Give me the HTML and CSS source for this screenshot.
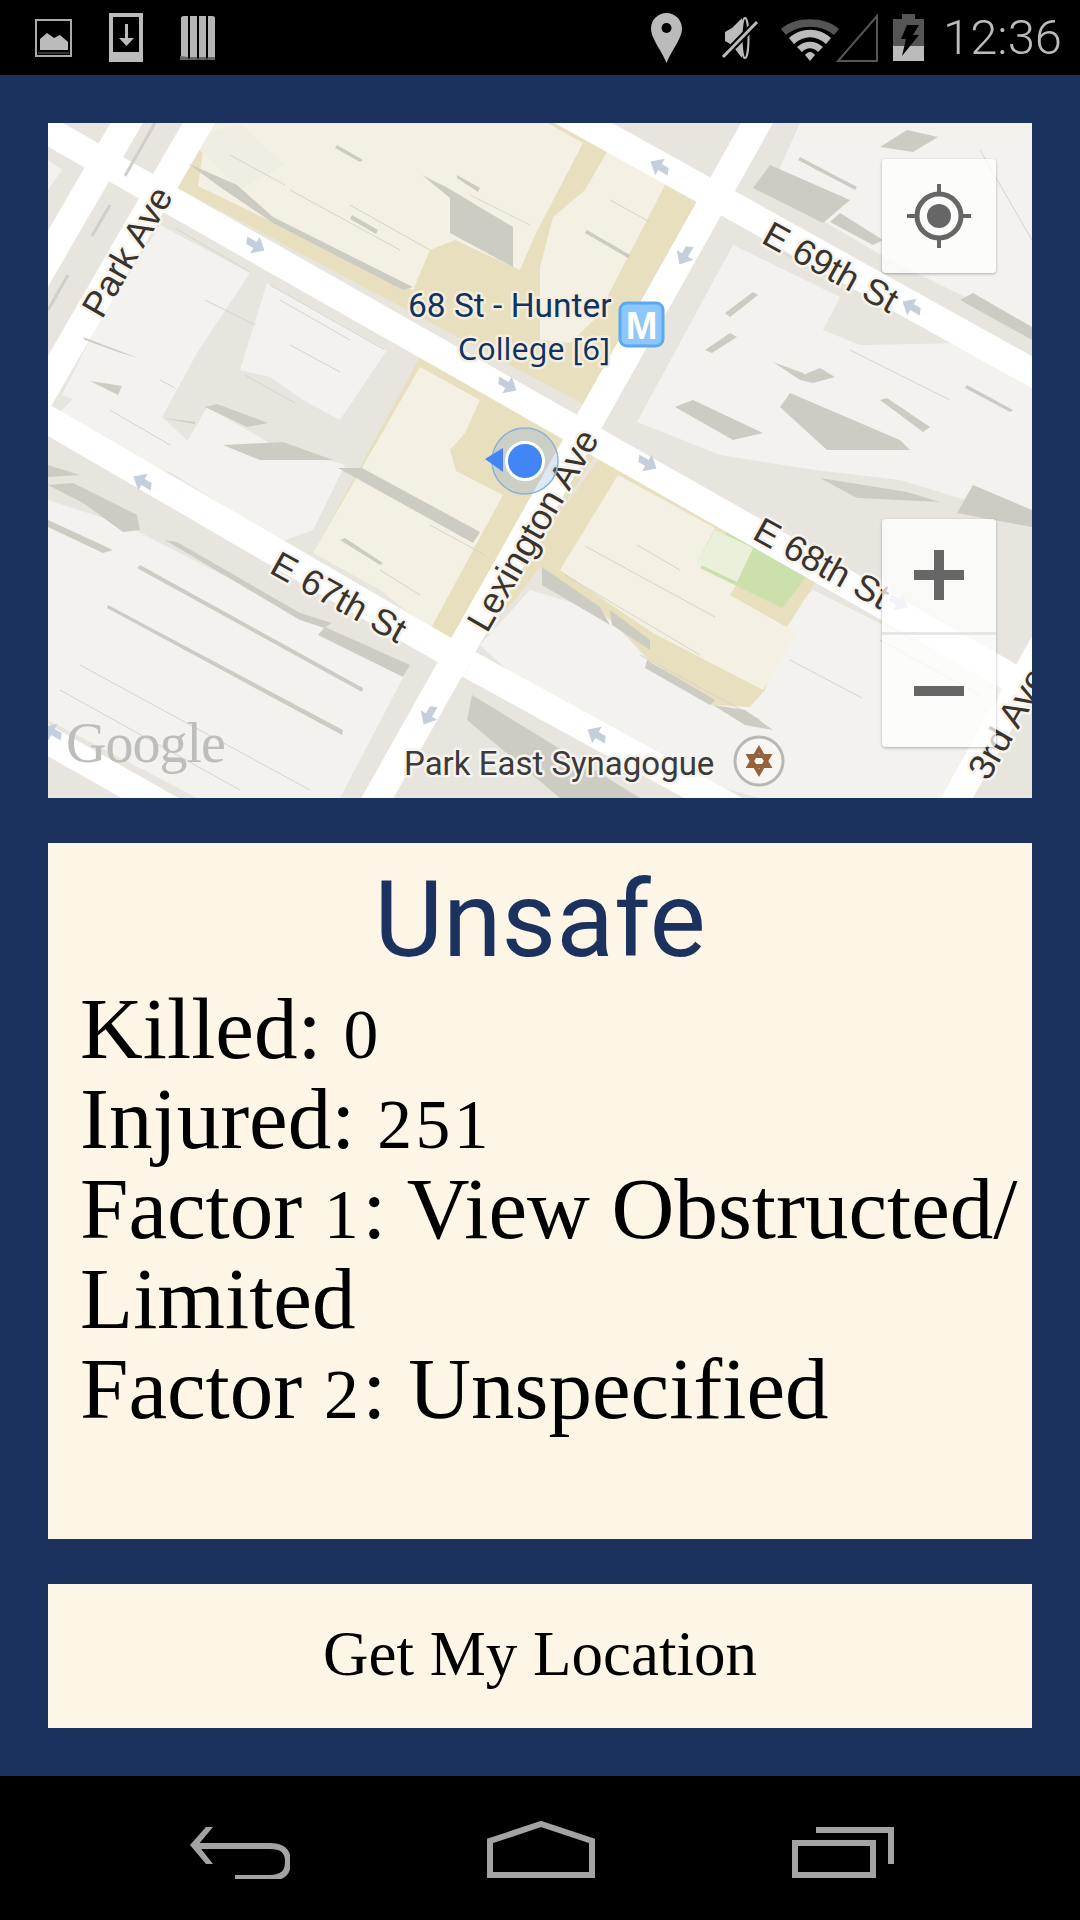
FILE: index.html
```html
<!DOCTYPE html>
<html lang="en">
<head>
    <meta charset="UTF-8">
    <meta name="viewport" content="width=device-width, initial-scale=1.0">
    <title>Safe Streets</title>
    <link rel="stylesheet" href="styles.css">
</head>
<body>
    <div class="status-bar">
        <div class="status-left">
            <svg class="icon" width="37" height="38" viewBox="0 0 37 38"><path d="M1 1h35v36H1z" fill="none" stroke="#aaa" stroke-width="2"/><path d="M5 31V20l7-6 7 5 6-3 8 7v8z" fill="#bbb"/><path d="M3 33h31v2H3z" fill="#333"/></svg>
            <svg class="icon" width="34" height="49" viewBox="0 0 34 49"><path d="M2 2h30v45H2z" fill="none" stroke="#bbb" stroke-width="4"/><path d="M2 39h30v8H2z" fill="#bbb"/><path d="M16 11h3v17h-3z" fill="#bbb"/><path d="M10 25h15l-7.500 8z" fill="#bbb"/></svg>
            <svg class="icon" width="36" height="45" viewBox="0 0 36 45"><path d="M1 3q0-2 3-2h4v44H1zM10 1h7v44h-7zM19 1h7v44h-7zM28 1h4q3 0 3 2v42h-7z" fill="#b5b5b5"/><path d="M0 41l8 1 1 3 1-3 7 0 1 3 1-3 7 0 1 3 1-3 7 0v4H0z" fill="#666"/></svg>
        </div>
        <div class="status-right">
            <svg class="icon icon-pin" width="31" height="50" viewBox="0 0 31 50"><path d="M15.500 0C7 0 0 7 0 15.500 0 26 10 36 15.500 50 21 36 31 26 31 15.500 31 7 24 0 15.500 0z" fill="#bbb"/><circle cx="15.500" cy="15" r="5" fill="#000"/></svg>
            <svg class="icon icon-mute" width="38" height="42" viewBox="0 0 38 42"><path d="M4 15 11 11 21 1v40L11 28 4 24z" fill="#bbb"/><ellipse cx="24" cy="21" rx="3.500" ry="20" fill="none" stroke="#bbb" stroke-width="2"/><path d="M2 40 36 5" stroke="#000" stroke-width="7"/><path d="M2 40 36 5" stroke="#bbb" stroke-width="3"/></svg>
            <svg class="icon icon-wifi" width="97" height="48" viewBox="0 0 97 48"><path d="M0 15C14 2 44 2 58 15L53 21C40 10 18 10 5 21z" fill="#555"/><path d="M8 24C20 13 38 13 50 24L45 30C35 21 23 21 13 30z" fill="#bbb"/><path d="M16 33C24 26 34 26 42 33L37 38C32 33 26 33 21 38z" fill="#bbb"/><path d="M24 41C27 37 31 37 34 41L29 47z" fill="#bbb"/><path d="M96 2V47H57z" fill="none" stroke="#555" stroke-width="2"/></svg>
            <svg class="icon icon-batt" width="31" height="47" viewBox="0 0 31 47"><path d="M9 0h13v5h9v42H0V5h9z" fill="#555"/><path d="M0 32h31v15H0z" fill="#bbb"/><path d="M14 11h12l-6 10h6L9 42l4-17H8z" fill="#000"/></svg>
            <span class="clock">12:36</span>
        </div>
    </div>

    <main class="app">
        <div class="map">
            <svg class="map-art" width="984" height="675" viewBox="48 123 984 675">
                <defs>
                    <path id="oneway" d="M-11-3.500H0v-6L11 0 0 9.500v-6H-8z"/>
                </defs>
                <rect class="ground" x="48" y="123" width="984" height="675"/>

                <!-- light building footprints -->
                <g class="bld">
                    <polygon points="160,225 250,273 197,353 155,430 62,395 100,320"/>
                    <polygon points="267,283 387,350 340,420 303,400 270,377 240,370"/>
                    <polygon points="207,407 270,443 345,465 313,530 280,542 170,472"/>
                    <polygon points="60,412 90,382 163,418 190,443 170,472 125,460 70,432 48,420"/>
                    <polygon points="48,500 125,525 407,670 340,798 197,798 48,720"/>
                    <polygon points="480,645 530,590 607,613 647,660 713,690 743,708 790,745 760,798 620,760 540,700"/>
                    <polygon points="780,620 813,590 1013,690 950,798 760,798 700,720"/>
                    <polygon points="733,245 840,297 823,330 860,345 967,343 1032,377 1032,520 900,480 815,470 720,455 637,422"/>
                    <polygon points="800,123 1032,123 1032,330 890,260 770,190"/>
                    <polygon points="48,160 62,170 48,190"/>
                </g>

                <!-- college grounds -->
                <g class="tan">
                    <polygon points="215,123 555,123 697,203 585,405 178,188"/>
                    <polygon points="420,357 597,453 463,664 430,630 377,580 313,553"/>
                    <polygon points="612,440 820,575 785,630 765,690 750,707 712,705 650,660 600,610 540,567 515,600 470,640"/>
                </g>
                <g class="cream">
                    <polygon points="207,123 547,123 583,143 535,235 520,270 455,240 430,250 413,290 198,186"/>
                    <polygon points="612,143 665,185 597,317 570,343 540,340 540,267 553,217 585,190"/>
                    <polygon points="420,367 480,400 465,433 450,450 456,471 503,495 430,630 380,590 313,553"/>
                    <polygon points="618,475 715,528 697,563 737,583 730,595 797,633 763,690 653,633 560,570"/>
                </g>
                <polygon class="hatch" points="190,140 240,123 285,165 240,190"/>
                <polygon class="grass" points="738,518 808,575 782,608 700,568"/>
                <polygon class="grass-light" points="715,530 753,548 737,582 697,563"/>

                <!-- thin building outlines -->
                <g class="outline">
                    <line x1="175" y1="228" x2="250" y2="272"/>
                    <line x1="205" y1="300" x2="255" y2="325"/>
                    <line x1="270" y1="285" x2="385" y2="350"/>
                    <line x1="280" y1="300" x2="350" y2="340"/>
                    <line x1="290" y1="345" x2="340" y2="372"/>
                    <line x1="245" y1="375" x2="295" y2="403"/>
                    <line x1="160" y1="380" x2="175" y2="388"/>
                    <line x1="80" y1="665" x2="310" y2="790"/>
                    <line x1="60" y1="690" x2="240" y2="790"/>
                    <line x1="110" y1="410" x2="170" y2="445"/>
                    <line x1="230" y1="155" x2="285" y2="185"/>
                    <line x1="290" y1="190" x2="400" y2="250"/>
                    <line x1="350" y1="205" x2="430" y2="250"/>
                    <line x1="470" y1="195" x2="530" y2="225"/>
                    <line x1="610" y1="200" x2="650" y2="222"/>
                    <line x1="430" y1="525" x2="485" y2="555"/>
                    <line x1="380" y1="570" x2="420" y2="595"/>
                    <line x1="637" y1="545" x2="680" y2="570"/>
                    <line x1="585" y1="546" x2="715" y2="617"/>
                    <line x1="565" y1="575" x2="700" y2="655"/>
                    <line x1="640" y1="655" x2="760" y2="720"/>
                    <line x1="790" y1="660" x2="862" y2="698"/>
                    <line x1="880" y1="640" x2="980" y2="695"/>
                    <line x1="760" y1="240" x2="840" y2="285"/>
                    <line x1="850" y1="350" x2="950" y2="400"/>
                    <line x1="980" y1="150" x2="1032" y2="240"/>
                </g>

                <!-- streets -->
                <g class="roads">
                    <line x1="-20" y1="92" x2="1100" y2="728"/>
                    <line x1="560" y1="110" x2="1100" y2="410"/>
                    <line x1="0" y1="392" x2="470" y2="665"/>
                    <line x1="470" y1="665" x2="790" y2="840"/>
                    <line x1="30" y1="730" x2="180" y2="815"/>
                    <line x1="140" y1="100" x2="20" y2="307"/>
                    <line x1="215" y1="95" x2="20" y2="432"/>
                    <line x1="770" y1="100" x2="365" y2="820"/>
                    <line x1="1080" y1="580" x2="950" y2="810"/>
                </g>
                <g class="median">
                    <line x1="155" y1="123" x2="125" y2="176"/>
                    <line x1="110" y1="205" x2="92" y2="236"/>
                    <line x1="68" y1="275" x2="48" y2="310"/>
                </g>

                <!-- building shadows -->
                <g class="shadow">
                    <polygon points="187,163 237,185 273,217 413,287 403,290 273,223 220,187 190,165"/>
                    <polygon points="422,175 448,188 513,227 513,267 450,233 450,198"/>
                    <polygon points="337,145 363,160 360,162 335,148"/>
                    <polygon points="457,175 480,188 478,192 457,178"/>
                    <polygon points="587,230 630,255 628,258 585,233"/>
                    <polygon points="352,215 378,230 376,234 350,219"/>
                    <polygon points="83,337 138,358 118,352 85,340"/>
                    <polygon points="90,381 122,386 118,395"/>
                    <polygon points="162,418 195,422 195,424"/>
                    <polygon points="205,407 217,404 268,423 247,427"/>
                    <polygon points="223,445 283,442 333,460 260,460"/>
                    <polygon points="338,468 362,468 480,532 473,543"/>
                    <polygon points="340,540 345,538 383,563 380,565"/>
                    <polygon points="48,465 80,475 48,477"/>
                    <polygon points="48,485 73,483 137,515 140,530 123,532 83,503"/>
                    <polygon points="48,520 113,550 103,553 48,527"/>
                    <polygon points="165,540 177,542 300,613 332,623 324,628 300,620"/>
                    <polygon points="325,627 410,665 403,677 318,635"/>
                    <polygon points="140,565 363,688 362,692 137,568"/>
                    <polygon points="108,605 343,730 342,735 107,608"/>
                    <polygon points="542,567 600,607 610,625 542,585"/>
                    <polygon points="610,610 650,640 650,650 612,625"/>
                    <polygon points="647,660 715,700 710,705 645,668"/>
                    <polygon points="713,705 745,710 773,730 745,725"/>
                    <polygon points="472,695 640,798 560,798 467,720"/>
                    <polygon points="753,188 770,165 850,200 823,223"/>
                    <polygon points="830,222 840,213 883,240 873,245"/>
                    <polygon points="960,300 973,293 1032,327 1032,340"/>
                    <polygon points="800,157 857,187 855,190 798,160"/>
                    <polygon points="880,147 907,130 938,137 913,152"/>
                    <polygon points="675,407 693,400 763,433 733,440"/>
                    <polygon points="725,313 753,292 758,295 730,317"/>
                    <polygon points="705,350 730,333 737,337 712,353"/>
                    <polygon points="773,362 803,373 813,383 800,380"/>
                    <polygon points="803,375 820,368 835,377 813,383"/>
                    <polygon points="780,407 790,393 900,440 910,450 827,450"/>
                    <polygon points="880,400 887,398 930,427 923,432"/>
                    <polygon points="967,385 1013,410 1010,412 965,388"/>
                    <polygon points="820,478 907,492 940,502 857,498"/>
                    <polygon points="957,513 973,485 1032,510 1032,527"/>
                </g>

                <!-- one way arrows -->
                <g class="arrows">
                    <use href="#oneway" transform="translate(255 245) rotate(30)"/>
                    <use href="#oneway" transform="translate(507 385) rotate(30)"/>
                    <use href="#oneway" transform="translate(647 463) rotate(30)"/>
                    <use href="#oneway" transform="translate(898 602) rotate(30)"/>
                    <use href="#oneway" transform="translate(660 167) rotate(210)"/>
                    <use href="#oneway" transform="translate(912 307) rotate(210)"/>
                    <use href="#oneway" transform="translate(143 482) rotate(210)"/>
                    <use href="#oneway" transform="translate(597 735) rotate(210)"/>
                    <use href="#oneway" transform="translate(53 732) rotate(210)"/>
                    <use href="#oneway" transform="translate(685 255) rotate(120)"/>
                    <use href="#oneway" transform="translate(429 715) rotate(120)"/>
                </g>

                <!-- labels -->
                <g class="labels">
                    <text class="label road-name" x="102" y="320" transform="rotate(-60 102 320)">Park Ave</text>
                    <text class="label road-name" x="760" y="242" transform="rotate(29 760 242)">E 69th St</text>
                    <text class="label road-name" x="751" y="538" transform="rotate(29 751 538)">E 68th St</text>
                    <text class="label road-name" x="268" y="572" transform="rotate(29 268 572)">E 67th St</text>
                    <text class="label road-name" x="487" y="634" transform="rotate(-60 487 634)">Lexington Ave</text>
                    <text class="label road-name" x="988" y="782" transform="rotate(-60 988 782)">3rd Ave</text>
                    <text class="label transit" x="408" y="317">68 St - Hunter</text>
                    <text class="label transit transit-alt" x="458" y="360">College [6]</text>
                    <text class="label place" x="404" y="775">Park East Synagogue</text>
                </g>
                <text class="google" x="66" y="762">Google</text>

                <!-- metro badge -->
                <rect x="620" y="303" width="43" height="43" rx="7" class="metro"/>
                <text x="641.500" y="339" class="metro-m">M</text>

                <!-- synagogue -->
                <circle cx="759" cy="761" r="24" class="syn"/>
                <path d="M759 749l10 17h-20zM759 773l-10-17h20z" class="star"/>

                <!-- my location -->
                <circle cx="525" cy="461" r="33" class="loc-halo"/>
                <path d="M485 459l18-11v24z" class="loc-arrow"/>
                <circle cx="525" cy="461" r="18.500" class="loc-dot"/>
            </svg>

            <div class="map-btn locate-btn">
                <svg width="64" height="64" viewBox="0 0 64 64"><circle cx="32" cy="32" r="22" fill="none" stroke="#666" stroke-width="5"/><circle cx="32" cy="32" r="12" fill="#666"/><path d="M32 0v12M32 52v12M0 32h12M52 32h12" stroke="#666" stroke-width="4"/></svg>
            </div>
            <div class="map-btn zoom-btns">
                <div class="zoom-cell"><svg width="50" height="50" viewBox="0 0 50 50"><path d="M20 0h10v20h20v10H30v20H20V30H0V20h20z" fill="#666"/></svg></div>
                <div class="zoom-cell zoom-cell-minus"><svg width="50" height="10" viewBox="0 0 50 10"><path d="M0 0h50v10H0z" fill="#666"/></svg></div>
            </div>
        </div>

        <section class="info-card">
            <h1 class="verdict">Unsafe</h1>
            <div class="stats">
                <div>Killed: <span class="num">0</span></div>
                <div>Injured: <span class="num">251</span></div>
                <div>Factor <span class="num">1</span>: View Obstructed/<br>Limited</div>
                <div>Factor <span class="num">2</span>: Unspecified</div>
            </div>
        </section>

        <button class="location-button">Get My Location</button>
    </main>

    <div class="nav-bar">
        <svg class="nav-icon" width="100" height="52" viewBox="0 0 100 52"><path d="M3 19H80c11 0 18 4 18 16 0 11-6 16-18 16H45" fill="none" stroke="#a3a3a3" stroke-width="6"/><path d="M23 0H16L0 18l16 19h7L8 18z" fill="#a3a3a3"/></svg>
        <svg width="108" height="57" viewBox="0 0 108 57"><path d="M3 54V20L54 3l51 17v34z" fill="none" stroke="#a3a3a3" stroke-width="6"/></svg>
        <svg class="nav-icon" width="102" height="52" viewBox="0 0 102 52"><path d="M24 3H99V37" fill="none" stroke="#a3a3a3" stroke-width="6"/><path d="M3 16H81V48H3z" fill="none" stroke="#a3a3a3" stroke-width="6"/></svg>
    </div>
</body>
</html>
```

FILE: styles.css
```css
* {
    box-sizing: border-box;
}
body {
    margin: 0;
    width: 1080px;
    height: 1920px;
    display: flex;
    flex-direction: column;
    background: #1c325e;
    font-family: 'Liberation Serif', serif;
    color: #000;
    overflow: hidden;
}
.status-bar {
    height: 75px;
    background: #000;
    display: flex;
    justify-content: space-between;
    align-items: center;
    padding: 0 18px 0 35px;
}
.status-left, .status-right {
    display: flex;
    align-items: center;
}
.status-left {
    gap: 37px;
}
.icon {
    display: block;
}
.icon-mute {
    margin-left: 39px;
}
.icon-wifi {
    margin-left: 22px;
}
.icon-batt {
    margin-left: 15px;
}
.clock {
    font-family: 'Roboto', sans-serif;
    font-weight: 300;
    font-size: 49px;
    color: #bbb;
    margin-left: 19px;
}
.app {
    flex: 1;
    padding: 48px;
    display: flex;
    flex-direction: column;
    gap: 45px;
}
.map {
    position: relative;
    height: 675px;
    overflow: hidden;
}
.map-art {
    display: block;
}
.ground { fill: #e8e5de; }
.bld polygon { fill: #f3f2ee; }
.tan polygon { fill: #e8dfbe; }
.cream polygon { fill: #f5f0e4; }
.hatch { fill: #f0eee3; }
.grass { fill: #cce0ab; }
.grass-light { fill: #e9f1da; }
.outline line {
    stroke: #d6d4cb;
    stroke-width: 1;
}
.roads line {
    stroke: #fff;
    stroke-width: 28;
}
.median line {
    stroke: #cfcec8;
    stroke-width: 3;
}
.shadow polygon { fill: #cdccc2; }
.arrows use { fill: #c5cfdc; }
.label {
    paint-order: stroke;
    stroke-width: 5px;
    stroke-linejoin: round;
}
.road-name {
    font-family: 'Liberation Sans', sans-serif;
    font-size: 36px;
    fill: #3a332b;
    stroke: #f6f4ef;
}
.transit {
    font-family: 'Roboto', sans-serif;
    font-size: 33.500px;
    fill: #0f3460;
    stroke: #f5eee0;
}
.transit-alt {
    font-family: 'Noto Sans', sans-serif;
    font-size: 30.500px;
}
.place {
    font-family: 'Roboto', sans-serif;
    font-size: 33px;
    fill: #3d3a37;
    stroke: #f5f4f0;
}
.google {
    font-family: 'Liberation Serif', serif;
    font-size: 56px;
    fill: #bdbdbb;
    letter-spacing: -1px;
}
.metro {
    fill: #8cc6fb;
    stroke: #5ba9f2;
    stroke-width: 3;
}
.metro-m {
    font-family: 'Liberation Sans', sans-serif;
    font-weight: bold;
    font-size: 38px;
    fill: #fff;
    text-anchor: middle;
}
.syn {
    fill: #f8f6f2;
    stroke: #b9b7b3;
    stroke-width: 3;
}
.star {
    fill: none;
    stroke: #94623b;
    stroke-width: 4;
}
.loc-halo {
    fill: rgba(120, 160, 220, 0.25);
    stroke: #86b3d8;
    stroke-width: 1.500;
}
.loc-arrow { fill: #4285f4; }
.loc-dot {
    fill: #4285f4;
    stroke: #fff;
    stroke-width: 3;
}
.map-btn {
    position: absolute;
    left: 834px;
    width: 114px;
    background: rgba(255, 255, 255, 0.75);
    border-radius: 4px;
    box-shadow: 0 1px 3px rgba(0, 0, 0, 0.3);
}
.locate-btn {
    top: 36px;
    height: 114px;
    display: flex;
    align-items: center;
    justify-content: center;
}
.zoom-btns {
    top: 396px;
    height: 228px;
    display: flex;
    flex-direction: column;
}
.zoom-cell {
    flex: 1;
    display: flex;
    align-items: center;
    justify-content: center;
}
.zoom-cell-minus {
    border-top: 3px solid #e6e6e4;
}
.info-card {
    height: 696px;
    background: #fdf5e6;
    padding: 0 0 0 32px;
}
.verdict {
    margin: 0 0 0 -32px;
    padding-top: 22px;
    font-family: 'Roboto', sans-serif;
    font-weight: 400;
    font-size: 106px;
    line-height: 110px;
    color: #1c325e;
    text-align: center;
}
.stats {
    font-size: 87px;
    line-height: 90px;
    margin-top: 9px;
    white-space: nowrap;
}
.num {
    font-size: 0.8em;
    line-height: 0;
    letter-spacing: 0.05em;
}
.location-button {
    height: 144px;
    border: none;
    background: #fdf5e6;
    padding: 0 0 4px;
    font-family: 'Liberation Serif', serif;
    font-size: 63px;
    color: #000;
}
.nav-bar {
    height: 144px;
    background: #000;
    display: flex;
    align-items: flex-start;
    padding: 45px 186px 0 190px;
    justify-content: space-between;
}
.nav-icon {
    margin-top: 6px;
}
```
